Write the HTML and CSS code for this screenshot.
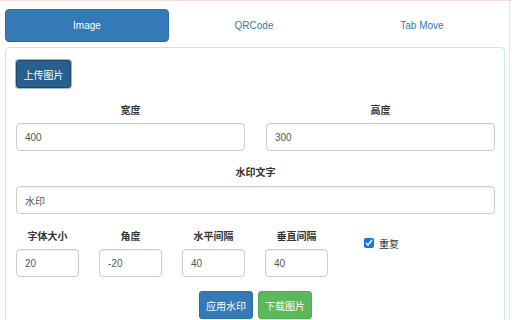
FILE: index.html
```html
<!DOCTYPE html>
<html lang="zh-CN">
<head>
  <meta charset="UTF-8" />
  <meta name="viewport" content="width=device-width, initial-scale=1.0"/>
  <title>Watermark</title>
  <link rel="stylesheet" href="styles.css">
</head>
<body>
  <div class="page">
    <ul class="tabs">
      <li class="tab active">Image</li>
      <li class="tab">QRCode</li>
      <li class="tab">Tab Move</li>
    </ul>

    <div class="panel">
      <button class="btn btn-upload">上传图片</button>

      <div class="row two">
        <div class="field">
          <label>宽度</label>
          <input class="input" type="text" value="400">
        </div>
        <div class="field">
          <label>高度</label>
          <input class="input" type="text" value="300">
        </div>
      </div>

      <div class="row text">
        <div class="field">
          <label>水印文字</label>
          <input class="input" type="text" value="水印">
        </div>
      </div>

      <div class="row small">
        <div class="field">
          <label>字体大小</label>
          <input class="input" type="text" value="20">
        </div>
        <div class="field">
          <label>角度</label>
          <input class="input" type="text" value="-20">
        </div>
        <div class="field">
          <label>水平间隔</label>
          <input class="input" type="text" value="40">
        </div>
        <div class="field">
          <label>垂直间隔</label>
          <input class="input" type="text" value="40">
        </div>
        <label class="check"><input type="checkbox" checked> 重复</label>
      </div>

      <div class="actions">
        <button class="btn btn-primary">应用水印</button>
        <button class="btn btn-success">下载图片</button>
      </div>
    </div>
  </div>
</body>
</html>
```

FILE: styles.css
```css
body {
  margin: 0;
  font-family: 'Liberation Sans', 'Noto Sans CJK SC', sans-serif;
  font-size: 9.5px;
  color: #333;
  background: #fff;
  border-top: 1px solid #f6dede;
}

.page {
  width: 509px;
  height: 319px;
  border-right: 1px solid #e6e6e6;
  overflow: hidden;
}

.tabs {
  list-style: none;
  margin: 8px 0 0 5px;
  padding: 0;
  width: 500px;
  display: grid;
  grid-template-columns: 164px 1fr 1fr;
  column-gap: 2px;
}

.tab {
  height: 33px;
  line-height: 33px;
  text-align: center;
  color: #337ab7;
  border-radius: 4px;
  font-size: 10px;
}

.tab.active {
  background: #337ab7;
  color: #fff;
  border: 1px solid #2e6da4;
  height: 31px;
  line-height: 31px;
}

.panel {
  margin: 5px 0 0 5px;
  width: 500px;
  height: 300px;
  border: 1px solid #c9e6f3;
  border-radius: 4px;
  padding: 12px 0 0 10px;
  box-sizing: border-box;
}

.btn {
  font-family: inherit;
  font-size: 10px;
  color: #fff;
  height: 28px;
  padding: 0 6px;
  border-radius: 3px;
  border: 1px solid transparent;
}

.btn-upload {
  width: 55px;
  background: #285f8f;
  border-color: #1d4670;
  box-shadow: 0 0 0 1px #a9b8c8;
}

.btn-primary {
  width: 54px;
  background: #337ab7;
  border-color: #2e6da4;
}

.btn-success {
  width: 54px;
  background: #5cb85c;
  border-color: #4cae4c;
}

.row {
  display: grid;
  width: 479px;
}

.row.two {
  grid-template-columns: 229px 229px;
  column-gap: 21px;
  margin-top: 16px;
}

.row.text {
  margin-top: 15px;
}

.row.small {
  grid-template-columns: repeat(4, 63px) 1fr;
  column-gap: 20px;
  margin-top: 16px;
}

.field label {
  display: block;
  text-align: center;
  font-weight: bold;
  font-size: 10px;
  height: 14px;
  line-height: 14px;
  margin-bottom: 5px;
}

.row.text .field label {
  margin-bottom: 6px;
}

.input {
  display: block;
  width: 100%;
  height: 28px;
  box-sizing: border-box;
  border: 1px solid #ccc;
  border-radius: 4px;
  padding: 0 8px;
  font-family: inherit;
  font-size: 10px;
  color: #555;
  box-shadow: inset 0 1px 1px rgba(0, 0, 0, 0.06);
}

.check {
  display: flex;
  align-items: center;
  gap: 5px;
  margin: 6px 0 0 16px;
  align-self: start;
  height: 14px;
  font-size: 10px;
}

.check input {
  margin: 0;
  width: 10px;
  height: 10px;
  accent-color: #1a73e8;
}

.actions {
  display: flex;
  justify-content: center;
  gap: 5px;
  width: 479px;
  margin-top: 14px;
}
```
